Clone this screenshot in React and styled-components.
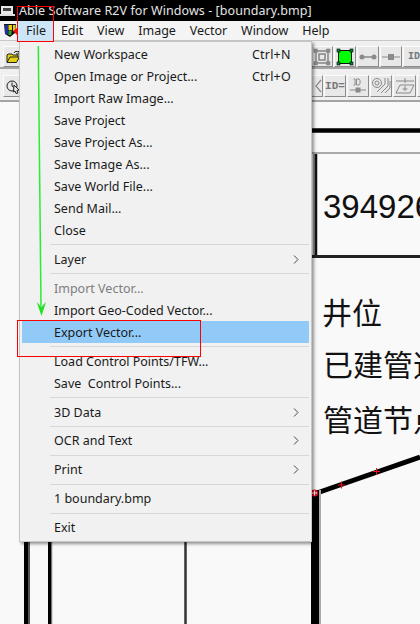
import React from "react";
import styled, { createGlobalStyle } from "styled-components";

const Global = createGlobalStyle`
  *, *::before, *::after { box-sizing: border-box; }
  html, body { margin: 0; padding: 0; background: #f9f9f9; }
  body { font-family: "Noto Sans", "Noto Sans CJK SC", sans-serif; overflow: hidden; }
`;
const Window = styled.div`
  position: relative; width: 420px; height: 624px; overflow: hidden;
  display: flex; flex-direction: column; background: #f9f9f9;
`;
const TitleBar = styled.div`
  height: 21px; background: #000; color: #e4e4e4; display: flex; align-items: center;
  font-size: 12.5px; flex: none; letter-spacing: .07px; padding-bottom: 1px;
`;
const TitleIcon = styled.svg` width: 15px; height: 14px; flex: none; margin-right: 4px; `;
const MenuBar = styled.div`
  height: 20px; background: #f4f4f4; display: flex; align-items: center; font-size: 12.5px;
  color: #1a1a1a; flex: none; border-bottom: 1px solid #c8c8c8; padding-left: 3px;
`;
const LogoIcon = styled.svg` width: 15px; height: 15px; flex: none; `;
const MenuEntry = styled.span`
  display: flex; align-items: center; height: 20px; padding: 0 ${p => p.$pad ?? 6.9}px;
  background: ${p => (p.$active ? "#cde6f7" : "transparent")};
`;
const ToolRow = styled.div`
  height: ${p => p.$h}px; flex: none; background: #f0f0f0; display: flex; align-items: flex-start;
  border-bottom: 2px solid #a4a4a4; padding: ${p => p.$top}px 0 0 3px; overflow: hidden;
`;
const ToolGroup = styled.div` display: flex; gap: 1px; flex: none; margin-left: ${p => p.$left}px; `;
const ToolButton = styled.div`
  width: ${p => p.$w ?? 22}px; height: ${p => p.$h ?? 21}px; background: #e8e8e8; flex: none;
  display: grid; place-items: center; overflow: hidden;
  border: 1px solid; border-color: #fbfbfb #8c8c8c #8c8c8c #fbfbfb;
`;
const SideButton = styled(ToolButton)`
  width: 24px; justify-items: start; padding-left: 2px;
`;
const IdMark = styled.span`
  font: bold ${p => p.$size ?? 10}px "Liberation Mono", monospace; color: #777; line-height: 1;
`;
const Doc = styled.svg` flex: 1; display: block; width: 420px; `;
const Digits = styled.text` font-family: "Liberation Sans", sans-serif; fill: #111; font-size: 33px; `;
const Label = styled.text` font-family: "Noto Sans CJK SC", sans-serif; fill: #111; font-size: 30px; `;
const Menu = styled.div`
  position: absolute; left: 19px; top: 41px; width: 293px; height: 501px;
  background: #f1f1f1; border: 1px solid #c6c6c6; padding: 2px;
  box-shadow: 2px 2px 3px rgba(0,0,0,.42); font-size: 12.5px; color: #1a1a1a;
  display: flex; flex-direction: column;
`;
const Item = styled.div`
  height: 21.94px; flex: none; display: flex; align-items: center; justify-content: space-between;
  padding: 0 10px 0 32px; white-space: pre;
  color: ${p => (p.$disabled ? "#7d7d7d" : "inherit")};
  background: ${p => (p.$active ? "#91c9f7" : "transparent")};
`;
const Shortcut = styled.span` width: 47px; letter-spacing: .2px; `;
const Sep = styled.div` height: 1px; flex: none; background: #d7d7d7; margin: 3px 0 3px 28px; `;
const Chevron = styled.svg` width: 6px; height: 9px; `;
const RedBox = styled.div`
  position: absolute; border: 1px solid #f00;
  left: ${p => p.$l}px; top: ${p => p.$t}px; width: ${p => p.$w}px; height: ${p => p.$hh}px;
`;
const Overlay = styled.svg` position: absolute; left: 0; top: 0; width: 420px; height: 624px; pointer-events: none; `;

const Arr = () => <Chevron viewBox="0 0 6 9"><path d="M1 .5 5 4.5 1 8.5" fill="none" stroke="#444" /></Chevron>;
const G = "#8a8a8a";

export default function App() {
  return (
    <Window>
      <Global />
      <TitleBar>
        <TitleIcon viewBox="0 0 15 14">
          <rect x="1" y="3" width="12" height="8" fill="#e8e8e8" />
          <rect x="3" y="5" width="8" height="3" fill="#444" />
          <rect x="0" y="11" width="15" height="2" fill="#ddd" />
        </TitleIcon>
        <span>Able Software R2V for Windows - [boundary.bmp]</span>
      </TitleBar>
      <MenuBar>
        <LogoIcon viewBox="0 0 15 15">
          <path d="M1 1h12l-1 9-5 4-5-3z" fill="#111" />
          <path d="M2 2h3v9H2z" fill="#2030a0" />
          <path d="M5.500 2H9v5H5.500z" fill="#e4d010" />
          <path d="M5.500 7.500H9L8 12H5.500z" fill="#30a030" />
          <path d="M10 2h2.500l-.7 6H10z" fill="#e4d010" />
        </LogoIcon>
        <MenuEntry $active $pad={8}>File</MenuEntry>
        <MenuEntry>Edit</MenuEntry><MenuEntry>View</MenuEntry><MenuEntry>Image</MenuEntry>
        <MenuEntry>Vector</MenuEntry><MenuEntry>Window</MenuEntry><MenuEntry>Help</MenuEntry>
      </MenuBar>
      <ToolRow $h={28} $top={5}>
        <SideButton>
          <svg width="14" height="14" viewBox="0 0 14 14">
            <path d="M1 12 1 5l1-1h4l1 1h5v2" fill="#e4d010" stroke="#222" />
            <path d="M1 12.500 4 7h9.500l-3 5.500z" fill="#e4d010" stroke="#222" />
            <path d="M8 3c1-2 3-2 4-1l1-1v3h-3" fill="none" stroke="#222" />
          </svg>
        </SideButton>
        <ToolGroup $left={284}>
          <ToolButton>
            <svg width="18" height="18" viewBox="0 0 18 18" fill="none" stroke={G} strokeWidth="1.6">
              <rect x="3" y="3" width="12" height="12" /><rect x="6" y="6" width="6" height="6" />
              <rect x="1.500" y="1.500" width="2.500" height="2.500" fill={G} /><rect x="14" y="1.500" width="2.500" height="2.500" fill={G} />
              <rect x="1.500" y="14" width="2.500" height="2.500" fill={G} /><rect x="14" y="14" width="2.500" height="2.500" fill={G} />
            </svg>
          </ToolButton>
          <ToolButton>
            <svg width="18" height="18" viewBox="0 0 18 18">
              <rect x="2.500" y="2.500" width="13" height="13" fill="#00ff00" stroke="#111" />
              <rect x="1" y="1" width="3" height="3" fill="#083" stroke="#000" strokeWidth=".6" /><rect x="14" y="1" width="3" height="3" fill="#083" stroke="#000" strokeWidth=".6" />
              <rect x="1" y="14" width="3" height="3" fill="#083" stroke="#000" strokeWidth=".6" /><rect x="14" y="14" width="3" height="3" fill="#083" stroke="#000" strokeWidth=".6" />
            </svg>
          </ToolButton>
          <ToolButton>
            <svg width="18" height="8" viewBox="0 0 18 8"><path d="M2 4h14" stroke={G} strokeWidth="1.500" /><circle cx="3" cy="4" r="2.500" fill={G} /><circle cx="15" cy="4" r="2.500" fill={G} /></svg>
          </ToolButton>
          <ToolButton>
            <svg width="18" height="8" viewBox="0 0 18 8"><path d="M0 4h18" stroke={G} /><rect x="6" y="1" width="6" height="6" fill={G} /></svg>
          </ToolButton>
          <ToolButton>
            <IdMark>ID</IdMark>
          </ToolButton>
        </ToolGroup>
      </ToolRow>
      <ToolRow $h={33} $top={6}>
        <SideButton $h={22}>
          <svg width="14" height="16" viewBox="0 0 14 16" fill="none" stroke="#222">
            <circle cx="6" cy="8" r="5" />
            <path d="M6 4.500V8l2 1.500" />
            <path d="M8 7l5 5-2 .5 1 2.500-2 .5-1-2.500L7.500 14z" fill="#e8e8e8" />
          </svg>
        </SideButton>
        <ToolGroup $left={274}>
          <ToolButton $h={22}>
            <svg width="20" height="16" viewBox="0 0 20 16"><path d="M19 2 14 8l5 6" fill="none" stroke={G} strokeWidth="1.200" /></svg>
          </ToolButton>
          <ToolButton $h={22}><IdMark $size={11}>ID=</IdMark></ToolButton>
          <ToolButton $h={22}>
            <svg width="18" height="18" viewBox="0 0 18 18">
              <path d="M1 13h16" stroke={G} /><rect x="6.500" y="10.500" width="5" height="5" fill={G} />
              <path d="M6 2v6M7.500 2v6h2.500l1-1.500v-3L10 2H7.500M6 2H4.500M6 8H4.500" fill="none" stroke={G} />
            </svg>
          </ToolButton>
          <ToolButton $h={22}>
            <svg width="20" height="18" viewBox="0 0 20 18" fill="none" stroke={G}>
              <circle cx="6" cy="6" r="4.500" /><circle cx="6" cy="6" r="2" />
              <path d="M14 1v6l-8 8M17 1v8l-7 7M19 4v7l-5 5" />
            </svg>
          </ToolButton>
          <ToolButton $h={22} $w={23}>
            <svg width="20" height="18" viewBox="0 0 20 18" fill="none" stroke={G}>
              <path d="M1 4h18M5 8h14l-4 8H1zM10 1v5M10 9v5M7.500 12h5" />
            </svg>
          </ToolButton>
          <ToolButton $h={22} />
        </ToolGroup>
      </ToolRow>
      <Doc viewBox="0 102 420 522">
        <path d="M311 130.500H420" stroke="#000" strokeWidth="4.500" />
        <path d="M311 153H420" stroke="#aaa" strokeWidth="2" />
        <path d="M314 154V258" stroke="#999" strokeWidth="2" />
        <path d="M316 154V257" stroke="#111" strokeWidth="2.500" />
        <path d="M311 256.500H420" stroke="#222" strokeWidth="3" />
        <Digits x="323" y="218">394926</Digits>
        <Label x="322" y="324">井位</Label>
        <Label x="323" y="376">已建管道</Label>
        <Label x="323" y="431">管道节点</Label>
        <path d="M314 494 420 457" stroke="#000" strokeWidth="5" />
        <path d="M320 490V624" stroke="#aaa" strokeWidth="2" />
        <path d="M315 490V624" stroke="#000" strokeWidth="8" />
        <path d="M29 540V624" stroke="#555" strokeWidth="2" />
        <path d="M26 540V624" stroke="#000" strokeWidth="4" />
        <path d="M51.500 540V624" stroke="#777" strokeWidth="1.500" />
        <path d="M49.500 540V624" stroke="#000" strokeWidth="3" />
        <path d="M185.500 540V624" stroke="#333" strokeWidth="2.500" />
        <circle cx="314.500" cy="493" r="3.500" fill="#e01020" />
        <path d="M312 493h5M314.500 490.500v5" stroke="#fff" strokeWidth="1" />
        <path d="M338 485h7M341.500 481.500v7M373 471.500h7M376.500 468v7" stroke="#f01020" strokeWidth="1" />
      </Doc>
      <Menu>
        <Item><span>New Workspace</span><Shortcut>Ctrl+N</Shortcut></Item>
        <Item><span>Open Image or Project...</span><Shortcut>Ctrl+O</Shortcut></Item>
        <Item>Import Raw Image...</Item>
        <Item>Save Project</Item>
        <Item>Save Project As...</Item>
        <Item>Save Image As...</Item>
        <Item>Save World File...</Item>
        <Item>Send Mail...</Item>
        <Item>Close</Item>
        <Sep />
        <Item><span>Layer</span><Arr /></Item>
        <Sep />
        <Item $disabled>Import Vector...</Item>
        <Item>Import Geo-Coded Vector...</Item>
        <Item $active>Export Vector...</Item>
        <Sep />
        <Item>Load Control Points/TFW...</Item>
        <Item>Save  Control Points...</Item>
        <Sep />
        <Item><span>3D Data</span><Arr /></Item>
        <Sep />
        <Item><span>OCR and Text</span><Arr /></Item>
        <Sep />
        <Item><span>Print</span><Arr /></Item>
        <Sep />
        <Item>1 boundary.bmp</Item>
        <Sep />
        <Item>Exit</Item>
      </Menu>
      <RedBox $l={17} $t={6} $w={37} $hh={36} />
      <RedBox $l={17} $t={320} $w={184} $hh={37} />
      <Overlay viewBox="0 0 420 624">
        <path d="M38.300 46 41 306" stroke="#2cec2c" strokeWidth="1.500" />
        <path d="M36.700 302 41.500 316 46 302 41.300 307Z" fill="#22e022" />
        <path d="M17 28 13 31 17 35Z" fill="#f01010" />
      </Overlay>
    </Window>
  );
}
